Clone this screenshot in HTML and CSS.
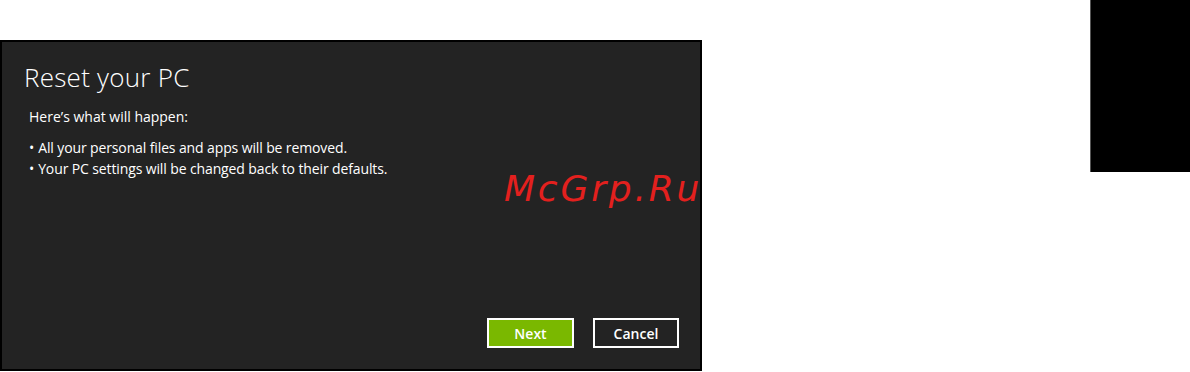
FILE: index.html
```html
<!DOCTYPE html>
<html>
<head>
<meta charset="utf-8">
<link rel="stylesheet" href="styles.css">
</head>
<body>
<div class="page">
  <div class="panel">
    <h1 class="title">Reset your PC</h1>
    <p class="lead">Here’s what will happen:</p>
    <ul class="list">
      <li>All your personal files and apps will be removed.</li>
      <li>Your PC settings will be changed back to their defaults.</li>
    </ul>
    <div class="actions">
      <button class="btn btn-next">Next</button>
      <button class="btn btn-cancel">Cancel</button>
    </div>
    <div class="watermark">McGrp.Ru</div>
  </div>
  <div class="blackbox"></div>
</div>
</body>
</html>
```

FILE: styles.css
```css
html, body {
  margin: 0;
  padding: 0;
  background: #ffffff;
}
.page {
  display: flex;
  justify-content: space-between;
  align-items: flex-start;
  width: 1190px;
  height: 372px;
  overflow: hidden;
}
.panel {
  position: relative;
  margin-top: 40px;
  width: 702px;
  height: 331px;
  border: 2px solid #000;
  background: #232323;
  color: #ffffff;
  font-family: "Open Sans", "Noto Sans", sans-serif;
  display: flex;
  flex-direction: column;
  padding: 0 21px 0 22px;
  box-sizing: border-box;
}
.title {
  margin: 19px 0 0 0;
  font-weight: 300;
  font-size: 26px;
  line-height: 32px;
  letter-spacing: 0.25px;
}
.lead {
  margin: 15px 0 0 5px;
  font-size: 14px;
  line-height: 18px;
}
.list {
  list-style: none;
  margin: 11px 0 0 5px;
  padding: 0;
  font-size: 14px;
  line-height: 21px;
  letter-spacing: -0.12px;
}
.list li::before {
  content: "\2022";
  margin-right: 4px;
}
.actions {
  margin-top: auto;
  margin-bottom: 21px;
  display: flex;
  justify-content: flex-end;
  gap: 19px;
}
.btn {
  height: 30px;
  border: 2px solid #ffffff;
  color: #ffffff;
  font-family: "Open Sans", "Noto Sans", sans-serif;
  font-size: 14px;
  font-weight: 600;
  padding: 0;
  box-sizing: border-box;
}
.btn-next {
  width: 87px;
  background: #7ab800;
}
.btn-cancel {
  width: 86px;
  background: #232323;
}
.watermark {
  position: absolute;
  left: 502px;
  top: 126px;
  color: #e3201e;
  font-family: "DejaVu Sans", sans-serif;
  font-style: italic;
  font-size: 36px;
  line-height: normal;
  letter-spacing: 2.8px;
}
.blackbox {
  width: 100px;
  height: 172px;
  box-sizing: border-box;
  background: #000;
  border-left: 1px solid #555;
}
```
